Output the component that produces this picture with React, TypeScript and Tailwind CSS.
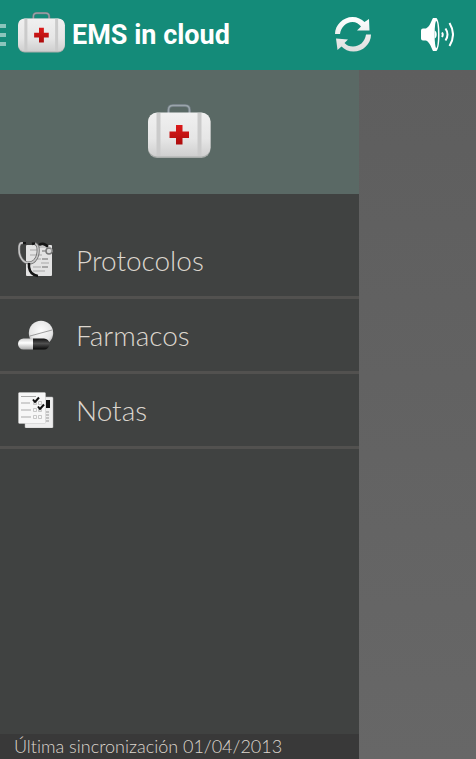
import type { ReactNode } from "react";

function MedicalCase({ className, id }: { className: string; id: string }) {
  return (
    <svg viewBox="0 0 64 56" className={className} aria-hidden="true">
      <defs>
        <linearGradient id={`${id}-body`} x1="0" y1="0" x2="0" y2="1">
          <stop offset="0" stopColor="#f0f0f0" />
          <stop offset="0.6" stopColor="#e6e6e6" />
          <stop offset="1" stopColor="#cfcfcf" />
        </linearGradient>
        <linearGradient id={`${id}-cross`} x1="0" y1="0" x2="0" y2="1">
          <stop offset="0" stopColor="#dc1a1a" />
          <stop offset="1" stopColor="#ac0c0c" />
        </linearGradient>
      </defs>
      <path d="M20.500 10V6Q20.500 1.500 25 1.500H37Q41.500 1.500 41.500 6V10" fill="none" stroke="#6f7a80" strokeWidth="3" />
      <path d="M20.500 9V6Q20.500 1.500 25 1.500H37Q41.500 1.500 41.500 6V9" fill="none" stroke="#9aa5aa" strokeWidth="1.500" />
      <rect x="0" y="9" width="62.500" height="45" rx="9" fill="#a9adab" />
      <rect x="0" y="8.500" width="62.500" height="44" rx="9" fill={`url(#${id}-body)`} />
      <path d="M8.500 9h4v43h-4zM49.500 9h4v43h-4z" fill="#cbcbcb" />
      <path d="M28 21h6.500v6.500H41V34h-6.500v6.500H28V34h-6.500v-6.500H28z" fill={`url(#${id}-cross)`} />
    </svg>
  );
}

function RefreshIcon() {
  return (
    <svg viewBox="0 0 36 36" className="size-9" aria-hidden="true">
      <defs>
        <linearGradient id="sync" x1="0" y1="0" x2="0" y2="36" gradientUnits="userSpaceOnUse">
          <stop offset="0" stopColor="#ffffff" />
          <stop offset="1" stopColor="#dcdcdc" />
        </linearGradient>
      </defs>
      <path d="M0 17C0 8 8 0 17.500 0c5 0 9 2 12 5l4.500-3 0.500 11.500H22l4-4C24 7 21 5 17.500 5 11 5 6 10 5 17z" fill="url(#sync)" />
      <path d="M36 17.500C36 27 28 34.500 18.500 34.500c-5 0-9-2-12-5L2.500 33 1 21.500l12 1-3.500 3.500c2 2.500 5 3.500 8.500 3.500 7 0 12-5 13-12z" fill="url(#sync)" />
    </svg>
  );
}

function SpeakerIcon() {
  return (
    <svg viewBox="0 0 34 36" className="h-9 w-[34px]" aria-hidden="true">
      <path d="M3 11.500h3c4-2 5-7 7-10.500h3.500c2.500 3 3 10 3 16.500s-0.500 13.500-3 16.500H13c-2-4-3-8.500-7-10.500H3q-2 0-2-2v-8q0-2 2-2z" fill="#fff" />
      <ellipse cx="16.300" cy="17.500" rx="1.700" ry="13.500" fill="#148b79" />
      <path d="M14.600 13.500c2.800 1 2.800 7 0 8z" fill="#fff" />
      <path d="M22 15.500q1.500 2 0 4.500M25.500 11.500q4 6 0 12M29.500 6q7 11.500 0 23" fill="none" stroke="#fff" strokeWidth="2" />
    </svg>
  );
}

function ProtocolIcon() {
  return (
    <svg viewBox="0 0 36 36" className="size-9" aria-hidden="true">
      <rect x="8" y="3" width="26" height="31" rx="1" fill="#e3e3e3" />
      <path d="M12 8h7M21 5h7M12 13h12M16 17h7M15 25h8M23 21h8M15 29h12" stroke="#bcbcbc" strokeWidth="1.500" />
      <path d="M24 9h6M24 17h6M24 25h6" stroke="#929292" strokeWidth="1.500" />
      <path d="M5 1Q1 0 1 7c0 8 4 14 10 14S21 14 20 6q0-4-5-5" fill="none" stroke="#666" strokeWidth="3" />
      <path d="M5 1Q1 0 1 7c0 8 4 14 10 14S21 14 20 6q0-4-5-5" fill="none" stroke="#c7c7c7" strokeWidth="1.500" />
      <path d="M5 1h3M14 2l3-1M21 3q5-3 9 2M11 21v4q1 8 9 9" fill="none" stroke="#151515" strokeWidth="2.500" />
      <circle cx="31" cy="9" r="3" fill="#d9d9d9" stroke="#777" strokeWidth="1.500" />
      <path d="M30 4q5 2 4 6" fill="none" stroke="#aaa" strokeWidth="1" />
    </svg>
  );
}

function PillsIcon() {
  return (
    <svg viewBox="0 0 36 36" className="size-9" aria-hidden="true">
      <defs>
        <radialGradient id="tablet" cx="0.5" cy="0.4" r="0.6">
          <stop offset="0" stopColor="#fcfcfc" />
          <stop offset="0.75" stopColor="#e6e6e6" />
          <stop offset="1" stopColor="#b5b5b5" />
        </radialGradient>
        <linearGradient id="capsule-light" x1="0" y1="0" x2="0" y2="1">
          <stop offset="0" stopColor="#d0d0d0" />
          <stop offset="0.4" stopColor="#fff" />
          <stop offset="1" stopColor="#aaa" />
        </linearGradient>
        <linearGradient id="capsule-dark" x1="0" y1="0" x2="0" y2="1">
          <stop offset="0" stopColor="#111" />
          <stop offset="0.45" stopColor="#505050" />
          <stop offset="1" stopColor="#080808" />
        </linearGradient>
      </defs>
      <circle cx="23" cy="16" r="12.200" fill="url(#tablet)" />
      <path d="M12 19l22-6" stroke="#888" strokeWidth="0.800" />
      <path d="M15 21.500H26a5.500 5.500 0 0 1 0 11H15z" fill="url(#capsule-dark)" />
      <path d="M15 21.500H5.500a5.500 5.500 0 0 0 0 11H15z" fill="url(#capsule-light)" />
    </svg>
  );
}

function NotesIcon() {
  return (
    <svg viewBox="0 0 36 36" className="size-9" aria-hidden="true">
      <rect x="7" y="5" width="28" height="31" rx="1" fill="#eee" stroke="#b5b5b5" strokeWidth="0.500" />
      <path d="M28 8h4v8h-4z" fill="#111" />
      <path d="M28 20h3M28 23h3M28 26h3M28 29h3" stroke="#999" />
      <rect x="0.500" y="0.500" width="27" height="31" rx="1" fill="#f7f7f7" stroke="#c4c4c4" strokeWidth="0.500" />
      <path d="M3 4.500h15M3 11h9M3 18h10M3 25h10" stroke="#aaa" strokeWidth="1.200" />
      <path d="M15.500 9.500h3v3h-3zM20.500 9.500h3v3h-3zM15.500 16.500h3v3h-3zM20.500 16.500h3v3h-3zM15.500 23.500h3v3h-3zM20.500 23.500h3v3h-3z" fill="none" stroke="#bbb" strokeWidth="0.800" />
      <path d="M15 7.500l2 2.500 4-4.500M20 14.500l2 2.500 4-4.500" fill="none" stroke="#111" strokeWidth="2" />
    </svg>
  );
}

function MenuItem({ icon, label }: { icon: ReactNode; label: string }) {
  return (
    <li className="border-b-3 border-[#52514f]">
      <button type="button" className="flex h-18 w-full items-center gap-[22px] px-[18px] text-left font-['Lato','Roboto',sans-serif] text-[28px] font-light text-[#dcd6ce]">
        {icon}
        <span>{label}</span>
      </button>
    </li>
  );
}

export default function App() {
  return (
    <div className="flex min-h-screen flex-col bg-[#636363] font-['Roboto','Liberation_Sans',sans-serif]">
      <header className="flex h-[70px] items-center justify-between bg-[#148b79] pr-[22px]">
        <div className="flex items-center">
          <button type="button" aria-label="Menú" className="flex w-[18px] flex-col gap-[5px]">
            <span className="h-1 w-1.5 bg-[#8ac5bc]" />
            <span className="h-1 w-1.5 bg-[#8ac5bc]" />
            <span className="h-1 w-1.5 bg-[#8ac5bc]" />
          </button>
          <MedicalCase id="header-case" className="mb-1 h-[42px] w-12" />
          <h1 className="ml-1.5 text-[27px] font-bold text-white">EMS in cloud</h1>
        </div>
        <div className="flex gap-[49px]">
          <button type="button" aria-label="Sincronizar">
            <RefreshIcon />
          </button>
          <button type="button" aria-label="Sonido">
            <SpeakerIcon />
          </button>
        </div>
      </header>
      <main className="flex grow bg-linear-to-b from-[#5e5e5e] to-[#676767]">
        <aside className="flex w-[359px] flex-col bg-[#404241]">
          <div className="flex h-31 items-center justify-center bg-[#5a6965]">
            <MedicalCase id="drawer-case" className="h-14 w-16" />
          </div>
          <nav className="grow pt-[30px]">
            <ul>
              <MenuItem icon={<ProtocolIcon />} label="Protocolos" />
              <MenuItem icon={<PillsIcon />} label="Farmacos" />
              <MenuItem icon={<NotesIcon />} label="Notas" />
            </ul>
          </nav>
          <p className="bg-[#393939] px-3.5 font-['Lato','Roboto',sans-serif] text-[18px] leading-[25px] font-light text-[#dcd6ce] [font-variant-ligatures:none]">
            Última sincronización 01/04/2013
          </p>
        </aside>
      </main>
    </div>
  );
}
